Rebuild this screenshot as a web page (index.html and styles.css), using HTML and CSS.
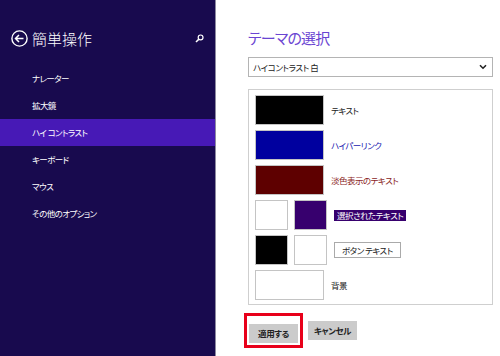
FILE: index.html
```html
<!DOCTYPE html>
<html lang="ja">
<head>
<meta charset="UTF-8">
<title>簡単操作</title>
<link rel="stylesheet" href="styles.css">
</head>
<body>

<div class="screen">
  <div class="side">
    <div class="side-head">
      <svg class="back" width="17" height="17" viewBox="0 0 17 17">
        <circle cx="8.5" cy="8.5" r="7.6" fill="none" stroke="#fff" stroke-width="1.4"/>
        <path d="M4.5 8.5h8M8 5l-3.5 3.5L8 12" fill="none" stroke="#fff" stroke-width="1.5"/>
      </svg>
      <span class="side-title">簡単操作</span>
      <svg class="search" width="9" height="9" viewBox="0 0 9 9">
        <circle cx="5.6" cy="3.4" r="2.4" fill="none" stroke="#fff" stroke-width="1.2"/>
        <path d="M3.9 5.1L1 8" stroke="#fff" stroke-width="1.5"/>
      </svg>
    </div>
    <ul class="menu">
      <li>ナレーター</li>
      <li>拡大鏡</li>
      <li class="active">ハイ コントラスト</li>
      <li>キーボード</li>
      <li>マウス</li>
      <li>その他のオプション</li>
    </ul>
  </div>

  <div class="main">
    <h1>テーマの選択</h1>
    <div class="select">
      <span>ハイコントラスト 白</span>
      <svg width="8" height="6" viewBox="0 0 8 6">
        <path d="M1 1.2l3 3 3-3" fill="none" stroke="#222" stroke-width="1.6"/>
      </svg>
    </div>

    <div class="preview">
      <div class="row">
        <div class="sw wide black"></div>
        <span class="label">テキスト</span>
      </div>
      <div class="row">
        <div class="sw wide blue"></div>
        <span class="label link">ハイパーリンク</span>
      </div>
      <div class="row">
        <div class="sw wide maroon"></div>
        <span class="label dim">淡色表示のテキスト</span>
      </div>
      <div class="row">
        <div class="sw"></div>
        <div class="sw purple"></div>
        <span class="label selected">選択されたテキスト</span>
      </div>
      <div class="row">
        <div class="sw black"></div>
        <div class="sw"></div>
        <span class="label btn-text">ボタン テキスト</span>
      </div>
      <div class="row">
        <div class="sw wide"></div>
        <span class="label">背景</span>
      </div>
    </div>

    <div class="actions">
      <div class="mark">
        <button class="btn">適用する</button>
      </div>
      <button class="btn">キャンセル</button>
    </div>
  </div>
</div>

</body>
</html>
```

FILE: styles.css
```css
body {
  margin: 0;
  font-family: "Noto Sans CJK JP", "Noto Sans", sans-serif;
  font-feature-settings: "palt";
  background-color: #fff;
}

.screen {
  display: flex;
  width: 500px;
  height: 356px;
}

.side {
  width: 215px;
  background-color: #180a4e;
  border-right: 1px solid #8d8aa0;
  color: #fff;
}

.side-head {
  display: flex;
  align-items: center;
  height: 65px;
  padding: 11px 11px 0 11px;
  box-sizing: border-box;
}

.back {
  flex: none;
}

.side-title {
  font-size: 15px;
  font-weight: 300;
  margin-left: 4px;
  flex: 1;
}

.menu {
  list-style: none;
  margin: 0;
  padding: 0;
}

.menu li {
  height: 27px;
  line-height: 27px;
  padding-left: 32px;
  font-size: 8.5px;
  letter-spacing: -0.6px;
}

.menu li.active {
  background-color: #4719b6;
}

.main {
  flex: 1;
  padding: 28px 7px 0 32px;
}

h1 {
  margin: 0 0 9px 0;
  font-size: 15px;
  font-weight: 400;
  line-height: 20px;
  letter-spacing: -0.8px;
  color: #6a45d2;
}

.select {
  display: flex;
  align-items: center;
  justify-content: space-between;
  height: 18px;
  border: 1px solid #b4b4b4;
  padding: 0 5px 0 4px;
  font-size: 8.5px;
  letter-spacing: -0.4px;
  color: #222;
}

.preview {
  margin-top: 12px;
  border: 1px solid #cfcfcf;
  padding: 5px 6px 4px 6px;
  display: flex;
  flex-direction: column;
  gap: 5px;
}

.row {
  display: flex;
  align-items: center;
  height: 30px;
  gap: 6px;
}

.sw {
  width: 31px;
  height: 28px;
  border: 1px solid #c4c4c4;
  background-color: #fff;
}

.sw.wide {
  width: 67px;
}

.black {
  background-color: #000;
}

.blue {
  background-color: #00009f;
}

.maroon {
  background-color: #5e0000;
}

.purple {
  background-color: #37006e;
}

.label {
  margin-left: 1px;
  font-size: 8.5px;
  letter-spacing: -0.5px;
  color: #222;
}

.label.link {
  color: #2020b0;
}

.label.dim {
  color: #8a2424;
}

.label.selected {
  background-color: #37006e;
  color: #fff;
  padding: 0 3px;
  line-height: 11px;
}

.label.btn-text {
  border: 1px solid #aaa;
  padding: 0 7px;
  line-height: 14px;
}

.actions {
  display: flex;
  align-items: center;
  gap: 5px;
  margin: 8px 0 0 -4px;
}

.mark {
  border: 3px solid #e8001a;
  padding: 2px;
}

.btn {
  width: 49px;
  height: 19px;
  border: none;
  background-color: #cbcbcb;
  font-family: inherit;
  font-feature-settings: "palt";
  font-size: 8.5px;
  font-weight: 700;
  letter-spacing: -0.4px;
  color: #222;
  padding: 0;
}
```
